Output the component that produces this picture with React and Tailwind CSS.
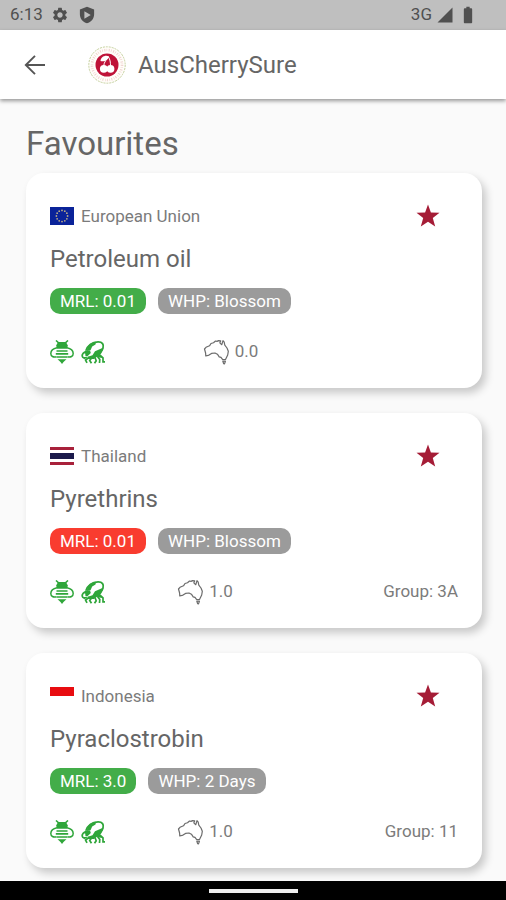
import React from 'react';
import { MdBatteryFull, MdSettings, MdSignalCellular4Bar } from 'react-icons/md';

const favourites = [
  { id: 1, country: 'European Union', flag: 'eu', name: 'Petroleum oil', mrl: '0.01', mrlOk: true, whp: 'Blossom', aus: '0.0', group: null },
  { id: 2, country: 'Thailand', flag: 'th', name: 'Pyrethrins', mrl: '0.01', mrlOk: false, whp: 'Blossom', aus: '1.0', group: '3A' },
  { id: 3, country: 'Indonesia', flag: 'id', name: 'Pyraclostrobin', mrl: '3.0', mrlOk: true, whp: '2 Days', aus: '1.0', group: '11' },
];

const ShieldIcon = () => (
  <svg viewBox="0 0 24 24" className="h-[18px] w-[18px]" fill="currentColor" aria-hidden="true">
    <path fillRule="evenodd" d="M12 1 2.500 4.500V11c0 5.600 3.900 10.600 9.500 12 5.600-1.400 9.500-6.400 9.500-12V4.500L12 1zM8.500 7 17 12l-8.500 5V7z" />
  </svg>
);

const BackIcon = () => (
  <svg viewBox="0 0 30 30" className="h-[30px] w-[30px]" fill="none" stroke="currentColor" strokeWidth="1.900" aria-hidden="true">
    <path d="M25 15H6.500M15 5.800 5.800 15l9.200 9.200" />
  </svg>
);

const StarIcon = () => (
  <svg viewBox="0 0 24 24" className="h-6 w-6" fill="currentColor" aria-hidden="true">
    <path d="M12 .4l2.900 8 8.600.3-6.700 5.300 2.400 8.600L12 17.800l-7.200 4.800 2.400-8.600L.5 8.700l8.600-.3z" />
  </svg>
);

const Logo = () => (
  <svg viewBox="0 0 38 38" className="h-[38px] w-[38px]" aria-hidden="true">
    <circle cx="19" cy="19" r="18.200" fill="#fffdf9" stroke="#c3cf9c" strokeWidth="1" strokeDasharray="2 1" />
    <circle cx="19" cy="19" r="15" fill="none" stroke="#f0d2cf" strokeWidth="2.600" strokeDasharray="1 1.300 .6 1.600" />
    <circle cx="19" cy="19" r="11.500" fill="#bf1238" />
    <path d="M12.500 15c0-4 4.500-6.500 8.500-4.800-.5 3.500-4.500 5.800-8.500 4.800z" fill="#fff" />
    <path d="M20.500 11c-2 2.500-4.500 5-4.800 9M20.500 11c1.600 2.500 2 5 2 9" fill="none" stroke="#fff" strokeWidth="1" />
    <circle cx="15.800" cy="22.800" r="3.900" fill="#fff" />
    <circle cx="22.500" cy="22.800" r="3.900" fill="#fff" />
  </svg>
);

const EU_STARS = Array.from({ length: 12 }, (_, i) => {
  const a = (i * Math.PI) / 6;
  return { x: 12 + 5.6 * Math.sin(a), y: 9 - 5.6 * Math.cos(a) };
});

const Flag = ({ code }) => (
  <svg viewBox="0 0 24 18" className="h-[18px] w-6 shrink-0" aria-hidden="true">
    {code === 'eu' && (
      <>
        <rect width="24" height="18" fill="#0a2399" />
        {EU_STARS.map((s, i) => (
          <circle key={i} cx={s.x} cy={s.y} r="0.900" fill="#b9a987" />
        ))}
      </>
    )}
    {code === 'th' && (
      <>
        <rect width="24" height="18" fill="#fff" />
        <rect width="24" height="3" fill="#a8213b" />
        <rect y="6" width="24" height="6" fill="#1b1a4b" />
        <rect y="15" width="24" height="3" fill="#a8213b" />
      </>
    )}
    {code === 'id' && (
      <>
        <rect width="24" height="18" fill="#fff" />
        <rect width="24" height="9" fill="#e80c10" />
      </>
    )}
  </svg>
);

const BeeIcon = () => (
  <svg viewBox="0 0 24 24" className="h-6 w-6" aria-hidden="true">
    <g fill="none" stroke="#2fa63a">
      <path d="M6 .5 8.800 3M18 .5 15.200 3" strokeWidth="1.600" />
      <path d="M7 7.800C3.500 8.500.9 10.500.8 13.500c0 3 2.700 4 5.600 3.200M17 7.800c3.500.7 6.100 2.700 6.200 5.700 0 3-2.700 4-5.600 3.200" strokeWidth="1.500" />
    </g>
    <g fill="#2fa63a">
      <path d="M8 2h8l1.800 3.500-.7 3.200H6.900l-.7-3.200z" />
      <path d="M6.500 10.200h11v1.600h-11zM5.800 13h12.400v1.800H5.800zM6.500 16.200h11v1.600h-11z" />
      <path d="M7.500 19.200h9L13.500 22 12 24l-1.500-2z" />
    </g>
  </svg>
);

const BeetleIcon = () => (
  <svg viewBox="0 0 24 24" className="h-6 w-6" aria-hidden="true">
    <g fill="none" stroke="#2fa63a">
      <path d="M5 10.500C6.500 6 11 2 17 1.900c4.500-.1 6 2.600 5 6.100-.5 2-1.500 3.500-3 5" strokeWidth="1.800" />
      <path d="M5.500 12C3 12 1 13.800 1.200 16c.3 2.200 2.600 2.500 4.600 1.300" strokeWidth="1.800" />
      <path d="M8 17.500 4.500 20l1.500 2.800M11 17.500l-2.300 3 1.800 2.700M14 17.500l1.200 3.300-1.700 2.500M16.500 16.500l2.300 3-.3 3.500M19 15l3 2.800v4h2" strokeWidth="1.700" />
    </g>
    <g fill="#2fa63a">
      <path d="M7 6c1.800-2.400 4-3.800 8-4.300l-.5 2.800-3.300 2-1.700 3.700-3.800.8z" />
      <path d="M4 10.500h5l.8 2.500-3.300 3.300-2-.3-.3-2.500z" />
      <path d="M21.500 8c-.2 3-.8 5-2.300 6.800l2.300 3.200-3.500-.5-2-.8-3 2.300H7l-.5-2.200 5-1.500 2.500-4z" />
    </g>
  </svg>
);

const AustraliaIcon = () => (
  <svg viewBox="0 0 26 26" className="h-[26px] w-[26px]" fill="none" stroke="#6b6b6b" strokeWidth="1.200" strokeLinejoin="round" aria-hidden="true">
    <path d="M1.500 10 3 8.300l3.500-1.500L8 4.500l2.500-.8 2-1.700 1.500.4 1.500-.8 2.200.3-.9 2 2 1.800 1.200-4 1.200 1.500.6 3L24 9l1.300 3.300-.6 3.700-2.200 4.500-3-.2-1.500-2-1.800-.5-1.800-2.600-2.400-1.200-3.500.4-2.500 1.700-3.200.9L2.600 14z" />
    <path d="m19.800 22 2.600.2-.9 2.700-.9-.3z" />
  </svg>
);

const FavouriteCard = ({ item }) => (
  <li className="rounded-[18px] bg-white px-6 pt-[31px] pb-[23px] shadow-[4px_5px_8px_rgba(0,0,0,0.2)]">
    <div className="flex h-6 items-center gap-[7px]">
      <Flag code={item.flag} />
      <span className="flex-1 text-[17px] leading-6 text-[#7b7b7b]">{item.country}</span>
      <button type="button" aria-label={`Remove ${item.name} from favourites`} className="mr-[18px] text-[#a51c36]">
        <StarIcon />
      </button>
    </div>

    <h2 className="mt-[15px] text-2xl leading-8 text-[#666666]">{item.name}</h2>

    <div className="mt-[13px] flex gap-3 text-[17px] leading-[26px] text-white">
      <span className={`rounded-[10px] px-[10px] ${item.mrlOk ? 'bg-[#43ad49]' : 'bg-[#f93c2f]'}`}>MRL: {item.mrl}</span>
      <span className="rounded-[10px] bg-[#9b9b9b] px-[10px]">WHP: {item.whp}</span>
    </div>

    <div className="mt-[25px] flex h-[26px] items-center text-[17px] text-[#7b7b7b]">
      <div className="flex gap-[7px]">
        <BeeIcon />
        <BeetleIcon />
      </div>
      <div className="flex flex-1 items-center justify-center gap-[6px]">
        <AustraliaIcon />
        <span>{item.aus}</span>
      </div>
      <span className={`text-right ${item.group ? 'w-3/8' : 'w-1/4'}`}>{item.group && `Group: ${item.group}`}</span>
    </div>
  </li>
);

const App = () => {
  return (
    <div className="flex h-screen flex-col bg-[#fafafa] font-[Roboto,sans-serif]">
      {/* Status bar */}
      <div className="flex h-[30px] shrink-0 items-center bg-[#bfbfbf] px-[10px] text-[17px] text-[#505050]">
        <span>6:13</span>
        <div className="ml-2 flex items-center gap-[9px]">
          <MdSettings size={18} />
          <ShieldIcon />
        </div>
        <div className="mr-[18px] ml-auto flex items-center gap-1">
          <span>3G</span>
          <MdSignalCellular4Bar size={18} />
          <MdBatteryFull size={20} />
        </div>
      </div>

      {/* App bar */}
      <header className="z-10 flex h-[69px] shrink-0 items-center bg-white px-5 shadow-[0_2px_4px_rgba(0,0,0,0.4)]">
        <button type="button" aria-label="Back" className="text-[#555555]">
          <BackIcon />
        </button>
        <div className="ml-[38px] flex items-center gap-3">
          <Logo />
          <span className="text-2xl text-[#666666]">AusCherrySure</span>
        </div>
      </header>

      <main className="flex-1 overflow-y-auto pt-[25px] pr-6 pb-2 pl-[26px] [scrollbar-width:none]">
        <h1 className="text-[33px] leading-10 text-[#666666]">Favourites</h1>
        <ul className="mt-[9px] space-y-[25px]">
          {favourites.map(item => (
            <FavouriteCard key={item.id} item={item} />
          ))}
        </ul>
      </main>

      {/* Gesture bar */}
      <div className="flex h-[19px] shrink-0 items-center justify-center bg-black">
        <div className="h-1 w-[89px] bg-[#eeeeee]"></div>
      </div>
    </div>
  );
};

export default App;
